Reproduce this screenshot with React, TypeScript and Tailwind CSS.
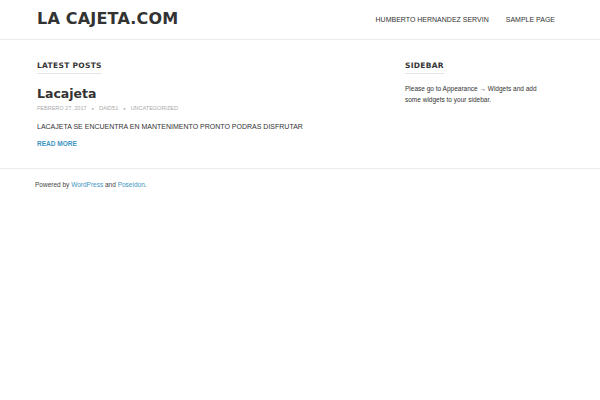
export default function App() {
  return (
    <div className="min-h-[400px] bg-white text-[#333] font-['Liberation_Sans',Arial,sans-serif]">
      {/* header */}
      <header className="border-b border-[#ebebeb]">
        <div className="mx-[37px] flex h-[39px] items-center justify-between">
          <h1 className="font-['DejaVu_Sans',sans-serif] text-[16px] font-bold leading-none tracking-[0.2px] text-[#333] pb-[1px]">
            LA CAJETA.COM
          </h1>
          <nav className="flex gap-[17px] pr-[8px] text-[7px] leading-none uppercase text-[#333]">
            <span>Humberto Hernandez Servin</span>
            <span>Sample Page</span>
          </nav>
        </div>
      </header>

      {/* content */}
      <div className="mx-[37px] flex gap-[35px] pt-[22px] pb-[21px] leading-none">
        <main className="w-[333px]">
          <div className="w-fit border-b border-[#e5e5e5] pb-[3px]">
            <h2 className="font-['DejaVu_Sans',sans-serif] text-[7.5px] font-bold uppercase tracking-[0.3px] leading-none text-[#333]">
              Latest Posts
            </h2>
          </div>
          <h3 className="mt-[14px] font-['DejaVu_Sans',sans-serif] text-[12.5px] font-bold leading-none text-[#333]">
            Lacajeta
          </h3>
          <div className="mt-[6px] flex items-center gap-[5px] text-[5.5px] leading-none uppercase text-[#aaa]">
            <span>Febrero 27, 2017</span>
            <span className="text-[4px]">●</span>
            <span>Daid51</span>
            <span className="text-[4px]">●</span>
            <span>Uncategorized</span>
          </div>
          <p className="mt-[11px] text-[7px] leading-none text-[#333]">
            LACAJETA SE ENCUENTRA EN MANTENIMENTO PRONTO PODRAS DISFRUTAR
          </p>
          <a className="mt-[11px] block text-[6.5px] leading-none font-bold uppercase text-[#3e95c4]">Read More</a>
        </main>

        <aside className="w-[148px]">
          <div className="w-fit border-b border-[#e5e5e5] pb-[3px]">
            <h2 className="font-['DejaVu_Sans',sans-serif] text-[7.5px] font-bold uppercase tracking-[0.3px] leading-none text-[#333]">
              Sidebar
            </h2>
          </div>
          <p className="mt-[9px] text-[6.5px] leading-[11px] text-[#333]">
            Please go to Appearance → Widgets and add some widgets to your sidebar.
          </p>
        </aside>
      </div>

      {/* footer */}
      <footer className="border-t border-[#ebebeb]">
        <p className="mx-[35px] pt-[13px] text-[6.5px] leading-none text-[#444]">
          Powered by <span className="text-[#3e95c4]">WordPress</span> and{" "}
          <span className="text-[#3e95c4]">Poseidon</span>.
        </p>
      </footer>
    </div>
  );
}
